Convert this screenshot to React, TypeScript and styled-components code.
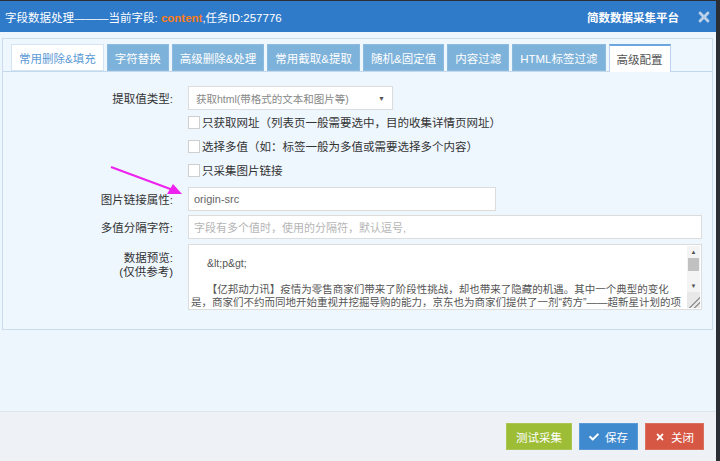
import styled, { createGlobalStyle, css } from "styled-components";
import { FaTimes, FaCheck } from "react-icons/fa";

const GlobalStyle = createGlobalStyle`
  html, body {
    margin: 0;
    padding: 0;
    background: #2b2e34;
    font-family: "Liberation Sans", "Noto Sans CJK SC", sans-serif;
    overflow: hidden;
  }
`;

const tabs = [
  { label: "常用删除&填充", kind: "light" },
  { label: "字符替换", kind: "normal" },
  { label: "高级删除&处理", kind: "normal" },
  { label: "常用截取&提取", kind: "normal" },
  { label: "随机&固定值", kind: "normal" },
  { label: "内容过滤", kind: "normal" },
  { label: "HTML标签过滤", kind: "normal" },
  { label: "高级配置", kind: "active" },
] as const;

const checks = [
  "只获取网址（列表页一般需要选中，目的收集详情页网址）",
  "选择多值（如：标签一般为多值或需要选择多个内容）",
  "只采集图片链接",
];

const previewLines = [
  { text: "", indent: 0 },
  { text: "&lt;p&gt;", indent: 16 },
  { text: "", indent: 0 },
  {
    text: "\u3000\u3000【亿邦动力讯】疫情为零售商家们带来了阶段性挑战，却也带来了隐藏的机遇。其中一个典型的变化",
    indent: 0,
  },
  {
    text: "是，商家们不约而同地开始重视并挖掘导购的能力，京东也为商家们提供了一剂“药方”——超新星计划的项",
    indent: 0,
  },
];

const App = () => {
  return (
    <>
      <GlobalStyle />
      <Modal>
        <TitleBar>
          <Title>
            字段数据处理———当前字段: <Field>content</Field>,任务ID:257776
          </Title>
          <Brand>简数数据采集平台</Brand>
          <CloseIcon>
            <FaTimes />
          </CloseIcon>
        </TitleBar>
        <Body>
          <Panel>
            <TabList>
              {tabs.map((t) => (
                <Tab key={t.label} $kind={t.kind}>
                  {t.label}
                </Tab>
              ))}
            </TabList>
            <Form>
              <Label>提取值类型:</Label>
              <Select>
                <span>获取html(带格式的文本和图片等)</span>
                <Caret>▼</Caret>
              </Select>

              {checks.map((c) => (
                <CheckRow key={c}>
                  <Box />
                  <span>{c}</span>
                </CheckRow>
              ))}

              <Label $top={5}>图片链接属性:</Label>
              <Input $top={5} $width={308}>
                origin-src
              </Input>

              <Label $top={4}>多值分隔字符:</Label>
              <Input $top={4} $placeholder>
                字段有多个值时，使用的分隔符，默认逗号,
              </Input>

              <PreviewLabel>
                数据预览:
                <br />
                (仅供参考)
              </PreviewLabel>
              <Preview>
                <PreviewText>
                  {previewLines.map((l, i) => (
                    <PreviewLine key={i} $indent={l.indent}>
                      {l.text || "\u00a0"}
                    </PreviewLine>
                  ))}
                </PreviewText>
                <ScrollBar>
                  <ScrollArrow>▲</ScrollArrow>
                  <Thumb />
                  <ScrollTrack />
                  <ScrollArrow>▼</ScrollArrow>
                  <Grip />
                </ScrollBar>
              </Preview>
            </Form>
            <Pointer viewBox="0 0 100 40" width="100" height="40">
              <line x1="2" y1="4" x2="64" y2="27" stroke="#ee22ee" strokeWidth="2" />
              <polygon points="73,31 58,31 64,21" fill="#ee22ee" />
            </Pointer>
          </Panel>
        </Body>
        <Footer>
          <Button $color="#9dbd36">测试采集</Button>
          <Button $color="#3f89cf">
            <FaCheck size={10} />
            保存
          </Button>
          <Button $color="#d65844">
            <FaTimes size={10} />
            关闭
          </Button>
        </Footer>
      </Modal>
    </>
  );
};

export default App;

const Modal = styled.div`
  width: 716px;
  height: 460px;
  margin-top: 1px;
  display: flex;
  flex-direction: column;
  background: #eef6fd;
`;

const TitleBar = styled.div`
  height: 31px;
  display: flex;
  align-items: center;
  padding: 0 4px 0 5px;
  background: #2f7bca;
  color: #fff;
  font-size: 11.5px;
`;

const Title = styled.div`
  flex: 1;
`;

const Field = styled.b`
  color: #fb7c17;
`;

const Brand = styled.div`
  font-weight: bold;
`;

const CloseIcon = styled.div`
  display: flex;
  margin-left: 17px;
  color: #b9d0e8;
  font-size: 16px;
`;

const Body = styled.div`
  flex: 1;
  padding: 6px 3px 0 2px;
`;

const Panel = styled.div`
  position: relative;
  height: 292px;
  box-sizing: border-box;
  border: 1px solid #cadcee;
  background: #eef6fe;
`;

const TabList = styled.div`
  display: flex;
  gap: 3px;
  padding: 5px 0 0 8px;
  border-bottom: 1px solid #c4d8ec;
`;

const Tab = styled.div<{ $kind: "light" | "normal" | "active" }>`
  height: 28px;
  box-sizing: border-box;
  display: flex;
  align-items: center;
  padding: 0 7px;
  font-size: 11.5px;
  margin-bottom: -1px;
  ${(p) =>
    p.$kind === "normal" &&
    css`
      background: #7db2da;
      color: #fff;
      border: 1px solid #8dbbdf;
      height: 27px;
      margin-bottom: 0;
    `}
  ${(p) =>
    p.$kind === "light" &&
    css`
      background: #fff;
      color: #5b9ad6;
      border: 1px solid #d5e4f2;
      height: 27px;
      margin-bottom: 0;
    `}
  ${(p) =>
    p.$kind === "active" &&
    css`
      background: #fff;
      color: #555;
      border: 1px solid #b9d3ec;
      border-top: 2px solid #6aa6dc;
      border-bottom: none;
    `}
`;

const Form = styled.div`
  display: grid;
  grid-template-columns: 170px 1fr;
  column-gap: 15px;
  align-items: center;
  padding: 14px 10px 0 0;
  font-size: 11.5px;
  color: #333;
`;

const Label = styled.div<{ $top?: number }>`
  text-align: right;
  margin-top: ${(p) => p.$top ?? 0}px;
`;

const Select = styled.div`
  width: 205px;
  height: 24px;
  box-sizing: border-box;
  display: flex;
  align-items: center;
  justify-content: space-between;
  padding: 0 7px 0 7px;
  background: #fff;
  border: 1px solid #dcdcdc;
  color: #888;
  font-size: 10.5px;
`;

const Caret = styled.span`
  font-size: 7px;
  color: #555;
`;

const CheckRow = styled.div`
  grid-column: 2;
  height: 24px;
  display: flex;
  align-items: center;
  gap: 2px;
  &:nth-of-type(1) {
    margin-top: 1px;
  }
`;

const Box = styled.div`
  width: 12px;
  height: 13px;
  background: #fff;
  border: 1px solid #cfcfcf;
  box-sizing: border-box;
`;

const Input = styled.div<{ $top?: number; $width?: number; $placeholder?: boolean }>`
  margin-top: ${(p) => p.$top ?? 0}px;
  width: ${(p) => (p.$width ? `${p.$width}px` : "auto")};
  height: 24px;
  box-sizing: border-box;
  display: flex;
  align-items: center;
  padding: 0 5px;
  background: #fff;
  border: 1px solid #dcdcdc;
  font-size: 11px;
  color: ${(p) => (p.$placeholder ? "#b5b5b5" : "#666")};
`;

const PreviewLabel = styled.div`
  align-self: start;
  margin-top: 12px;
  text-align: right;
  line-height: 14px;
`;

const Preview = styled.div`
  margin-top: 5px;
  height: 66px;
  box-sizing: border-box;
  display: flex;
  background: #fff;
  border: 1px solid #dcdcdc;
  overflow: hidden;
`;

const PreviewText = styled.div`
  flex: 1;
  padding: 0 2px;
  margin-top: -1px;
  font-size: 10.5px;
  line-height: 13px;
  color: #555;
  white-space: pre;
  overflow: hidden;
`;

const PreviewLine = styled.div<{ $indent: number }>`
  height: 13px;
  padding-left: ${(p) => p.$indent}px;
`;

const ScrollBar = styled.div`
  width: 13px;
  display: flex;
  flex-direction: column;
  background: #f4f4f4;
  margin: 1px;
`;

const ScrollArrow = styled.div`
  height: 12px;
  display: flex;
  align-items: center;
  justify-content: center;
  font-size: 6px;
  color: #505050;
`;

const Thumb = styled.div`
  height: 13px;
  margin: 0 1px;
  background: #c1c1c1;
`;

const ScrollTrack = styled.div`
  flex: 1;
`;

const Grip = styled.div`
  height: 16px;
  background: linear-gradient(
      135deg,
      transparent 60%,
      #999 60%,
      #999 66%,
      transparent 66%,
      transparent 78%,
      #999 78%,
      #999 84%,
      transparent 84%
    ),
    #e8e8e8;
`;

const Pointer = styled.svg`
  position: absolute;
  left: 106px;
  top: 124px;
  overflow: visible;
`;

const Footer = styled.div`
  height: 50px;
  box-sizing: border-box;
  display: flex;
  align-items: center;
  justify-content: flex-end;
  gap: 7px;
  padding-right: 12px;
  background: #eef1f5;
  border-top: 1px solid #dde4eb;
`;

const Button = styled.div<{ $color: string }>`
  height: 27px;
  display: flex;
  align-items: center;
  gap: 6px;
  padding: 0 10px;
  background: ${(p) => p.$color};
  color: #fff;
  font-size: 11.5px;
  box-shadow: inset 0 0 0 1px rgba(255, 255, 255, 0.15);
`;
